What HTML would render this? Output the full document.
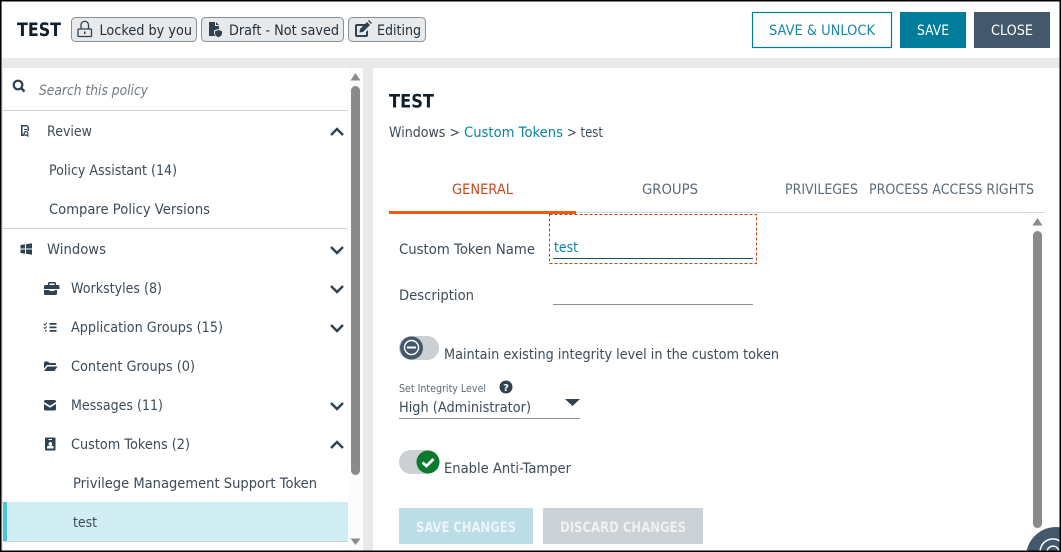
<!DOCTYPE html>
<html><head><meta charset="utf-8"><style>
html,body{margin:0;padding:0;background:#fff;width:1061px;height:552px;overflow:hidden}
svg{display:block}
text{font-family:"DejaVu Sans","Liberation Sans",sans-serif;font-size:14.5px;fill:#3d4b58}
.b{font-weight:700;font-size:18.5px;fill:#12202c}
.ic{fill:#2f4252}
.ch{fill:none;stroke:#2f4252;stroke-width:2.4}
.d{fill:#22303c}
</style></head><body>
<svg width="1061" height="552" viewBox="0 0 1061 552" xmlns="http://www.w3.org/2000/svg">
<rect width="1061" height="552" fill="#e8e9eb"/>
<rect x="2" y="1" width="1058" height="57" fill="#fff"/>
<rect x="3" y="68" width="360" height="483" fill="#fff"/>
<rect x="373" y="68" width="687" height="483" rx="2" fill="#fff"/>
<rect x="349" y="68" width="14" height="483" fill="#fcfcfc"/>
<rect x="1031" y="214" width="14" height="337" fill="#fcfcfc"/>
<text class="b" x="17" y="36" textLength="44" lengthAdjust="spacingAndGlyphs">TEST</text>
<g fill="#e8e9eb" stroke="#87919a"><rect x="71.5" y="17.5" width="125" height="24" rx="4"/><rect x="201.5" y="17.5" width="142" height="24" rx="4"/><rect x="348.5" y="17.5" width="77" height="24" rx="4"/></g>
<g fill="none" stroke="#2f4252" stroke-width="1.3"><rect x="78" y="29" width="13.5" height="7.5" rx="1"/><path d="M81 29v-4a3.700 3.700 0 0 1 7.500 0v4"/></g><rect x="84" y="31.500" width="1.500" height="2.500" fill="#2f4252"/>
<path class="ic" d="M209 22h6v4h4v3a5 5 0 0 0-1 0l-4 1.500v2c0 1.500.5 2.500 1.500 3.500H209zM216 22l3 3h-3zM218.500 30l3.500 1.300v2c0 2-1.500 3.200-3.500 4-2-.8-3.500-2-3.500-4v-2z"/>
<path d="M367 24h-10a2 2 0 0 0-2 2v9a2 2 0 0 0 2 2h9a2 2 0 0 0 2-2v-5l-2 2v3h-9v-9h8z" class="ic"/><path class="ic" d="M360 29l7-7 3 3-7 7-3.500.5zM368 21l1-1 3 3-1 1z"/>
<text class="d" x="99.500" y="35" textLength="92.500" lengthAdjust="spacingAndGlyphs">Locked by you</text>
<text class="d" x="229" y="35" textLength="110" lengthAdjust="spacingAndGlyphs">Draft - Not saved</text>
<text class="d" x="377" y="35" textLength="44" lengthAdjust="spacingAndGlyphs">Editing</text>
<rect x="752.500" y="12.500" width="139" height="35" fill="#fff" stroke="#007c9b" stroke-width="1.200"/>
<rect x="900" y="12" width="66" height="36" fill="#007c9b"/><rect x="974" y="12" width="76" height="36" fill="#43586a"/>
<text x="769" y="35" textLength="106" lengthAdjust="spacingAndGlyphs" style="fill:#1a87a5">SAVE &amp; UNLOCK</text>
<text x="917" y="35" textLength="32" lengthAdjust="spacingAndGlyphs" style="fill:#fff">SAVE</text>
<text x="991" y="35" textLength="42" lengthAdjust="spacingAndGlyphs" style="fill:#fff">CLOSE</text>

<circle cx="18" cy="85" r="4.300" fill="none" stroke="#2f4252" stroke-width="2.200"/><path d="M21 88l3.500 3.500" stroke="#2f4252" stroke-width="2.600"/>
<text x="39" y="95" textLength="109" lengthAdjust="spacingAndGlyphs" style="font-style:italic;fill:#717b85">Search this policy</text>
<g fill="#cfd2d5"><rect x="3" y="110" width="345" height="1"/><rect x="3" y="228" width="345" height="1"/><rect x="3" y="541" width="345" height="1"/></g>
<path class="ic" d="M21 125h6l2 2v4h-1.500v-4.500H22.500v8H24v1.500h-3zM24 129h3v1h-3zM26 131a2.500 2.500 0 1 1-.1 0zm0 1.200a1.300 1.300 0 1 0 .1 0zM28 135l1 1.500-1 .5-1-1.500z"/>
<text x="47" y="136" textLength="45" lengthAdjust="spacingAndGlyphs">Review</text>
<text x="49" y="175" textLength="128" lengthAdjust="spacingAndGlyphs">Policy Assistant (14)</text>
<text x="49" y="214" textLength="161" lengthAdjust="spacingAndGlyphs">Compare Policy Versions</text>
<path class="ic" d="M20.500 245l4.500-.7v4.200h-4.500zM26 244.200l6-.9v5.200h-6zM20.500 249.500H25v4.200l-4.500-.7zM26 249.500h6v5.200l-6-.9z"/>
<text x="47" y="254" textLength="59" lengthAdjust="spacingAndGlyphs">Windows</text>
<path class="ic" d="M45.500 285H48v-1.500a1.500 1.500 0 0 1 1.500-1.500h2a1.500 1.500 0 0 1 1.500 0h1.500a1.500 1.500 0 0 1 1.500 1.500V285h-.5 2.500a1.500 1.500 0 0 1 1.500 1.500V289H44v-2.500a1.500 1.500 0 0 1 1.500-1.500zm4-1.500V285h5v-1.500zM44 290h5.500v1h5v-1H57v3.500a1.500 1.500 0 0 1-1.500 1.500h-10a1.500 1.500 0 0 1-1.500-1.500z"/>
<text x="71" y="293" textLength="91" lengthAdjust="spacingAndGlyphs">Workstyles (8)</text>
<path class="ic" d="M49.500 323h7v1.800h-7zM49.500 326.500h7v1.800h-7zM49.500 330h7v1.800h-7zM44 323.500l1 .8 1.500-1.800.7.5-2.200 2.700-1.600-1.400zM44 327l1 .8 1.500-1.800.7.500-2.200 2.700-1.600-1.400zM45 330h1.500v1.500H45z"/>
<text x="71" y="332" textLength="152" lengthAdjust="spacingAndGlyphs">Application Groups (15)</text>
<path class="ic" d="M44 362.500a1 1 0 0 1 1-1h3l1.500 1.500h5.500a1 1 0 0 1 1 1v1H47l-3 3.500zM47.500 366.500H57.500l-3 4.500H44z"/>
<text x="71" y="371" textLength="124" lengthAdjust="spacingAndGlyphs">Content Groups (0)</text>
<path class="ic" d="M44 401.500a1.500 1.500 0 0 1 1.500-1.500h9a1.500 1.500 0 0 1 1.500 1.500v.5l-6 3.800-6-3.800zM44 404l6 3.800 6-3.800v5a1.500 1.500 0 0 1-1.500 1.500h-9a1.500 1.500 0 0 1-1.500-1.500z"/>
<text x="71" y="410" textLength="92" lengthAdjust="spacingAndGlyphs">Messages (11)</text>
<path class="ic" fill-rule="evenodd" d="M46 437.500h8.500a1 1 0 0 1 1 1v11a1 1 0 0 1-1 1H46a1 1 0 0 1-1-1v-11a1 1 0 0 1 1-1zm2.500 1.500v1h3.500v-1zm1.800 3a1.800 1.800 0 1 0 .1 0zM47 448.500h6.500V447c0-1-1-1.500-3.200-1.500S47 446 47 447z"/>
<text x="71" y="449" textLength="119" lengthAdjust="spacingAndGlyphs">Custom Tokens (2)</text>
<g class="ch"><path class="ch" d="M331 135l6-6 6 6"/><path class="ch" d="M331 247l6 6 6-6"/><path class="ch" d="M331 286l6 6 6-6"/><path class="ch" d="M331 325l6 6 6-6"/><path class="ch" d="M331 403l6 6 6-6"/><path class="ch" d="M331 448l6-6 6 6"/></g>
<text x="73" y="488" textLength="244" lengthAdjust="spacingAndGlyphs">Privilege Management Support Token</text>
<rect x="3" y="502" width="345" height="39" fill="#d2eef5"/><rect x="3" y="502" width="4" height="39" fill="#4cc3de"/>
<text x="73" y="527" textLength="24" lengthAdjust="spacingAndGlyphs">test</text>
<path d="M350.500 80.500l5-7.500 5 7.500z" fill="#8a8a8a"/><path d="M350.500 538.500h10l-5 6.500z" fill="#8a8a8a"/>
<rect x="351" y="86" width="9" height="389" rx="4.500" fill="#8a8a8a"/>

<text class="b" x="389" y="107.500" textLength="45" lengthAdjust="spacingAndGlyphs">TEST</text>
<text x="389" y="137" textLength="71" lengthAdjust="spacingAndGlyphs">Windows &gt;</text>
<text x="464" y="137" textLength="99" lengthAdjust="spacingAndGlyphs" style="fill:#0b85a3">Custom Tokens</text>
<text x="567" y="137" textLength="36" lengthAdjust="spacingAndGlyphs">&gt; test</text>
<text x="452" y="194" textLength="61" lengthAdjust="spacingAndGlyphs" style="fill:#c9491f">GENERAL</text>
<text x="642" y="194" textLength="56" lengthAdjust="spacingAndGlyphs" style="fill:#5d6a76">GROUPS</text>
<text x="785" y="194" textLength="73" lengthAdjust="spacingAndGlyphs" style="fill:#5d6a76">PRIVILEGES</text>
<text x="869" y="194" textLength="165" lengthAdjust="spacingAndGlyphs" style="fill:#5d6a76">PROCESS ACCESS RIGHTS</text>
<rect x="389" y="212" width="656" height="1" fill="#d3d5d8"/><rect x="389" y="211" width="187" height="3" fill="#f05a0a"/>
<rect x="549.500" y="214.500" width="207" height="49" fill="none" stroke="#c2410f" stroke-dasharray="3 2"/>
<text x="399" y="254" textLength="136" lengthAdjust="spacingAndGlyphs">Custom Token Name</text>
<text x="554" y="252" textLength="24" lengthAdjust="spacingAndGlyphs" style="fill:#0b85a3">test</text>
<rect x="553" y="258" width="200" height="1" fill="#1a5568"/>
<text x="399" y="300" textLength="75" lengthAdjust="spacingAndGlyphs">Description</text>
<rect x="553" y="304" width="200" height="1" fill="#87919a"/>
<rect x="399" y="336" width="40" height="24" rx="12" fill="#cbd0d4"/>
<circle cx="411.500" cy="348" r="11.500" fill="#43586a"/><circle cx="411.500" cy="347.500" r="7" fill="none" stroke="#fff" stroke-width="1.400"/><rect x="407" y="346.500" width="9" height="2" fill="#fff"/>
<text x="444" y="359" textLength="335" lengthAdjust="spacingAndGlyphs">Maintain existing integrity level in the custom token</text>
<text x="399" y="392" textLength="87" lengthAdjust="spacingAndGlyphs" style="font-size:10.5px;fill:#5d6a76">Set Integrity Level</text>
<circle cx="506" cy="387" r="6.500" fill="#2f4252"/><text x="506" y="391" text-anchor="middle" style="font-size:10px;font-weight:700;fill:#fff">?</text>
<text x="399" y="412" textLength="132" lengthAdjust="spacingAndGlyphs">High (Administrator)</text>
<path d="M565 399h15l-7.500 7z" fill="#2f4252"/><rect x="399" y="418" width="181" height="1" fill="#87919a"/>
<rect x="399" y="450" width="40" height="24" rx="12" fill="#cbd0d4"/>
<circle cx="428" cy="462" r="11.500" fill="#0a7a2f"/><path d="M422.500 462.500l4 3.500 7-7" fill="none" stroke="#fff" stroke-width="2.800"/>
<text x="444" y="473" textLength="127" lengthAdjust="spacingAndGlyphs">Enable Anti-Tamper</text>
<rect x="399" y="508" width="134" height="36" fill="#bcdde5"/><rect x="543" y="508" width="160" height="36" fill="#ccd1d5"/>
<text x="416" y="532" textLength="100" lengthAdjust="spacingAndGlyphs" style="fill:#ebf6f9;font-weight:700">SAVE CHANGES</text>
<text x="560" y="532" textLength="126" lengthAdjust="spacingAndGlyphs" style="fill:#eff1f2;font-weight:700">DISCARD CHANGES</text>
<path d="M1032.500 225.500l5-7.500 5 7.500z" fill="#8a8a8a"/><rect x="1033" y="231" width="9" height="297" rx="4.500" fill="#8a8a8a"/>
<path d="M1026.600 551A30 30 0 0 1 1060 527.300V551Z" fill="#43586a"/>
<path d="M1040 551A13 13 0 0 1 1060 541" fill="none" stroke="#fff" stroke-width="1.500"/>
<path d="M1047.100 551A6 6 0 0 1 1058.900 551" fill="none" stroke="#fff" stroke-width="1.500"/>
<rect x="0" y="0" width="1061" height="1.500" fill="#000"/><rect x="0" y="0" width="1.500" height="552" fill="#000"/><rect x="1059.500" y="0" width="1.500" height="552" fill="#000"/><rect x="0" y="550.500" width="1061" height="1.500" fill="#000"/>
</svg>
</body></html>
